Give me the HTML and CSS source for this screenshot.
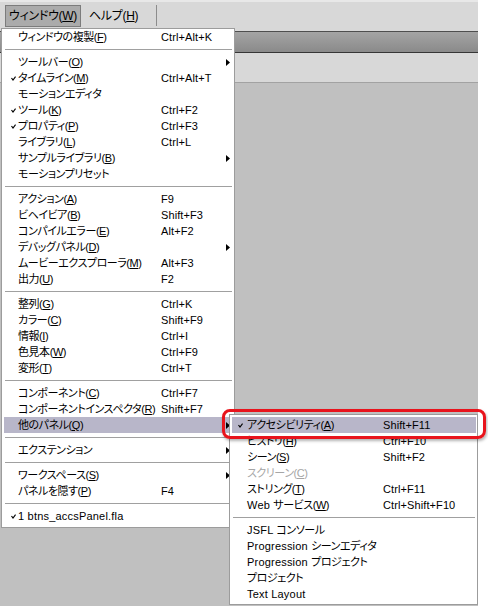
FILE: index.html
```html
<!DOCTYPE html>
<html lang="ja">
<head>
<meta charset="utf-8">
<title>ウィンドウ メニュー</title>
<link rel="stylesheet" href="styles.css">
</head>
<body>
<div class="app">
  <div class="menubar">
    <div class="mb-item active">ウィンドウ(<u>W</u>)</div>
    <div class="mb-item">ヘルプ(<u>H</u>)</div>
    <div class="mb-sep"></div>
  </div>
  <div class="toolbar"></div>
  <div class="panel"></div>
  <div class="stage"></div>

  <div class="menu main">
    <div class="mi"><span class="ck"></span><span class="lb">ウィンドウの複製(<u>F</u>)</span><span class="sc">Ctrl+Alt+K</span><span class="ar"></span></div>
    <div class="sep"><i></i></div>
    <div class="mi"><span class="ck"></span><span class="lb">ツールバー(<u>O</u>)</span><span class="sc"></span><span class="ar"><svg width="4" height="7" viewBox="0 0 4 7"><polygon points="0,0 4,3.5 0,7"/></svg></span></div>
    <div class="mi"><span class="ck"><svg width="5" height="5" viewBox="0 0 5 5"><polyline points="0.5,2 2,4 4.6,0.6"/></svg></span><span class="lb">タイムライン(<u>M</u>)</span><span class="sc">Ctrl+Alt+T</span><span class="ar"></span></div>
    <div class="mi"><span class="ck"></span><span class="lb">モーションエディタ</span><span class="sc"></span><span class="ar"></span></div>
    <div class="mi"><span class="ck"><svg width="5" height="5" viewBox="0 0 5 5"><polyline points="0.5,2 2,4 4.6,0.6"/></svg></span><span class="lb">ツール(<u>K</u>)</span><span class="sc">Ctrl+F2</span><span class="ar"></span></div>
    <div class="mi"><span class="ck"><svg width="5" height="5" viewBox="0 0 5 5"><polyline points="0.5,2 2,4 4.6,0.6"/></svg></span><span class="lb">プロパティ(<u>P</u>)</span><span class="sc">Ctrl+F3</span><span class="ar"></span></div>
    <div class="mi"><span class="ck"></span><span class="lb">ライブラリ(<u>L</u>)</span><span class="sc">Ctrl+L</span><span class="ar"></span></div>
    <div class="mi"><span class="ck"></span><span class="lb">サンプルライブラリ(<u>B</u>)</span><span class="sc"></span><span class="ar"><svg width="4" height="7" viewBox="0 0 4 7"><polygon points="0,0 4,3.5 0,7"/></svg></span></div>
    <div class="mi"><span class="ck"></span><span class="lb">モーションプリセット</span><span class="sc"></span><span class="ar"></span></div>
    <div class="sep"><i></i></div>
    <div class="mi"><span class="ck"></span><span class="lb">アクション(<u>A</u>)</span><span class="sc">F9</span><span class="ar"></span></div>
    <div class="mi"><span class="ck"></span><span class="lb">ビヘイビア(<u>B</u>)</span><span class="sc">Shift+F3</span><span class="ar"></span></div>
    <div class="mi"><span class="ck"></span><span class="lb">コンパイルエラー(<u>E</u>)</span><span class="sc">Alt+F2</span><span class="ar"></span></div>
    <div class="mi"><span class="ck"></span><span class="lb">デバッグパネル(<u>D</u>)</span><span class="sc"></span><span class="ar"><svg width="4" height="7" viewBox="0 0 4 7"><polygon points="0,0 4,3.5 0,7"/></svg></span></div>
    <div class="mi"><span class="ck"></span><span class="lb">ムービーエクスプローラ(<u>M</u>)</span><span class="sc">Alt+F3</span><span class="ar"></span></div>
    <div class="mi"><span class="ck"></span><span class="lb">出力(<u>U</u>)</span><span class="sc">F2</span><span class="ar"></span></div>
    <div class="sep"><i></i></div>
    <div class="mi"><span class="ck"></span><span class="lb">整列(<u>G</u>)</span><span class="sc">Ctrl+K</span><span class="ar"></span></div>
    <div class="mi"><span class="ck"></span><span class="lb">カラー(<u>C</u>)</span><span class="sc">Shift+F9</span><span class="ar"></span></div>
    <div class="mi"><span class="ck"></span><span class="lb">情報(<u>I</u>)</span><span class="sc">Ctrl+I</span><span class="ar"></span></div>
    <div class="mi"><span class="ck"></span><span class="lb">色見本(<u>W</u>)</span><span class="sc">Ctrl+F9</span><span class="ar"></span></div>
    <div class="mi"><span class="ck"></span><span class="lb">変形(<u>T</u>)</span><span class="sc">Ctrl+T</span><span class="ar"></span></div>
    <div class="sep"><i></i></div>
    <div class="mi"><span class="ck"></span><span class="lb">コンポーネント(<u>C</u>)</span><span class="sc">Ctrl+F7</span><span class="ar"></span></div>
    <div class="mi"><span class="ck"></span><span class="lb">コンポーネントインスペクタ(<u>R</u>)</span><span class="sc">Shift+F7</span><span class="ar"></span></div>
    <div class="mi hl"><span class="ck"></span><span class="lb">他のパネル(<u>Q</u>)</span><span class="sc"></span><span class="ar"><svg width="4" height="7" viewBox="0 0 4 7"><polygon points="0,0 4,3.5 0,7"/></svg></span></div>
    <div class="sep"><i></i></div>
    <div class="mi"><span class="ck"></span><span class="lb">エクステンション</span><span class="sc"></span><span class="ar"><svg width="4" height="7" viewBox="0 0 4 7"><polygon points="0,0 4,3.5 0,7"/></svg></span></div>
    <div class="sep"><i></i></div>
    <div class="mi"><span class="ck"></span><span class="lb">ワークスペース(<u>S</u>)</span><span class="sc"></span><span class="ar"><svg width="4" height="7" viewBox="0 0 4 7"><polygon points="0,0 4,3.5 0,7"/></svg></span></div>
    <div class="mi"><span class="ck"></span><span class="lb">パネルを隠す(<u>P</u>)</span><span class="sc">F4</span><span class="ar"></span></div>
    <div class="sep"><i></i></div>
    <div class="mi"><span class="ck"><svg width="5" height="5" viewBox="0 0 5 5"><polyline points="0.5,2 2,4 4.6,0.6"/></svg></span><span class="lb"><span class="en">1 btns_accsPanel.fla</span></span><span class="sc"></span><span class="ar"></span></div>
  </div>

  <div class="menu sub">
    <div class="si hl"><span class="ck"><svg width="5" height="5" viewBox="0 0 5 5"><polyline points="0.5,2 2,4 4.6,0.6"/></svg></span><span class="lb">アクセシビリティ(<u>A</u>)</span><span class="sc">Shift+F11</span></div>
    <div class="si"><span class="ck"></span><span class="lb">ヒストリ(<u>H</u>)</span><span class="sc">Ctrl+F10</span></div>
    <div class="si"><span class="ck"></span><span class="lb">シーン(<u>S</u>)</span><span class="sc">Shift+F2</span></div>
    <div class="si off"><span class="ck"></span><span class="lb">スクリーン(<u>C</u>)</span><span class="sc"></span></div>
    <div class="si"><span class="ck"></span><span class="lb">ストリング(<u>T</u>)</span><span class="sc">Ctrl+F11</span></div>
    <div class="si"><span class="ck"></span><span class="lb"><span class="en">Web </span>サービス(<u>W</u>)</span><span class="sc">Ctrl+Shift+F10</span></div>
    <div class="sep"><i></i></div>
    <div class="si"><span class="ck"></span><span class="lb"><span class="en">JSFL </span>コンソール</span><span class="sc"></span></div>
    <div class="si"><span class="ck"></span><span class="lb"><span class="en">Progression </span>シーンエディタ</span><span class="sc"></span></div>
    <div class="si"><span class="ck"></span><span class="lb"><span class="en">Progression </span>プロジェクト</span><span class="sc"></span></div>
    <div class="si"><span class="ck"></span><span class="lb">プロジェクト</span><span class="sc"></span></div>
    <div class="si"><span class="ck"></span><span class="lb"><span class="en">Text Layout</span></span><span class="sc"></span></div>
  </div>

  <div class="callout"></div>
</div>
</body>
</html>
```

FILE: styles.css
```css
* { box-sizing: border-box; }
html, body { margin: 0; padding: 0; background: #fff; }
body {
  font-family: "Liberation Sans", "Noto Sans CJK JP", sans-serif;
  font-size: 11px;
  color: #000;
  font-feature-settings: "palt";
}
u { text-decoration: underline; text-underline-offset: 1px; }

.app {
  position: relative;
  width: 478px;
  height: 606px;
  background: #c0c0c0;
  display: flex;
  flex-direction: column;
}

.menubar {
  height: 31px;
  background: #d8d8d8;
  border-top: 2px solid #e8e8e8;
  display: flex;
  align-items: flex-start;
  padding: 3px 0 0 5px;
  flex: none;
  font-size: 12px;
}
.mb-item {
  height: 22px;
  line-height: 20px;
  padding: 0 3px;
  border: 1px solid transparent;
  margin-right: 4px;
  letter-spacing: -0.3px;
}
.mb-item.active { background: #ababab; border-color: #7c7c7c; }
.mb-sep {
  width: 1px;
  height: 21px;
  margin: 0 0 0 10px;
  background: #8c8c8c;
}

.toolbar {
  height: 22px;
  flex: none;
  border-top: 1px solid #4e4e4e;
  border-bottom: 1px solid #363636;
  background: linear-gradient(#a4a4a4, #8a8a8a);
}
.panel {
  height: 30px;
  flex: none;
  background: #d8d8d8;
  border-bottom: 1px solid #a2a2a2;
}
.stage { flex: 1; background: #c0c0c0; }

.menu {
  position: absolute;
  background: #fff;
  border: 1px solid #9c9c9c;
}
.menu.main { left: 1px; top: 28px; width: 234px; height: 500px; padding: 0 0 3px; }
.menu.sub { left: 229px; top: 414px; width: 249px; height: 191px; padding: 2px 0 3px; }

.mi, .si {
  display: grid;
  height: 16px;
  line-height: 16px;
  white-space: nowrap;
  align-items: center;
}
.mi { grid-template-columns: 14px 143px 1fr 8px; margin: 0 2px; }
.si { grid-template-columns: 15px 136px 1fr; margin: 0 1px 0 2px; }
.mi > span, .si > span { display: block; height: 16px; }
.lb { letter-spacing: -0.45px; }
.lb .en { letter-spacing: 0.2px; }
.sc { letter-spacing: 0.1px; }
.hl { background: #b8b6c9; }
.off { color: #a6a6a6; }

.ck svg { display: block; margin-top: 6px; fill: none; stroke: #000; stroke-width: 1.2; }
.mi .ck svg { margin-left: 7px; }
.si .ck svg { margin-left: 6px; }
.ar svg { display: block; margin: 5px 0 0 2px; fill: #000; }

.sep { height: 9px; padding: 4px 2px 0 3px; }
.sep i { display: block; height: 1px; background: #a0a0a0; }

.callout {
  position: absolute;
  left: 222px;
  top: 409px;
  width: 264px;
  height: 30px;
  border: 3px solid #e8141c;
  border-radius: 8px;
  box-shadow: 1px 2px 3px rgba(0, 0, 0, 0.3);
}
```
